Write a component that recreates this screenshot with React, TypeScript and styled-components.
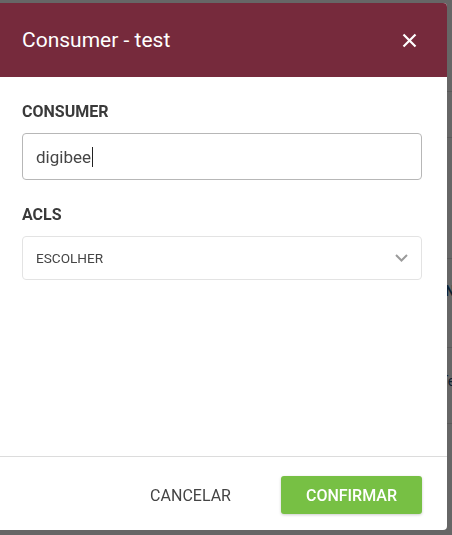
import React from "react";
import styled, { createGlobalStyle } from "styled-components";

const Global = createGlobalStyle`
  html, body { margin: 0; padding: 0; }
  body {
    font-family: Roboto, "Noto Sans", Arial, sans-serif;
    background: #ffffff;
    overflow: hidden;
  }
  * { box-sizing: border-box; }
`;

const Page = styled.div`
  width: 452px;
  height: 535px;
  background: #ffffff;
  display: flex;
  flex-direction: column;
`;

const Row = styled.div<{ $h: number; $indent?: number; $pt?: number; $bold?: boolean }>`
  height: ${(p) => p.$h}px;
  flex: none;
  border-bottom: 1px solid #dedede;
  display: flex;
  align-items: flex-start;
  padding-left: ${(p) => p.$indent ?? 0}px;
  padding-top: ${(p) => p.$pt ?? 0}px;
  font-size: 14px;
  line-height: 17px;
  font-weight: ${(p) => (p.$bold ? 700 : 400)};
  color: #1f4f7a;
  white-space: nowrap;
  overflow: hidden;
`;

const Backdrop = styled.div`
  position: fixed;
  inset: 0;
  background: rgba(0, 0, 0, 0.6);
`;

const Modal = styled.div`
  position: fixed;
  left: 0;
  top: 3px;
  width: 447px;
  height: 527px;
  background: #ffffff;
  border-radius: 0 4px 4px 0;
  overflow: hidden;
  display: flex;
  flex-direction: column;
`;

const Header = styled.div`
  height: 74px;
  flex: none;
  background: #762a3c;
  display: flex;
  align-items: center;
  justify-content: space-between;
  padding: 0 30px 0 22px;
`;

const Title = styled.h2`
  margin: 0;
  font-size: 21px;
  font-weight: 400;
  color: #ffffff;
  line-height: 25px;
`;

const CloseButton = styled.button`
  border: 0;
  padding: 0;
  background: none;
  width: 15px;
  height: 15px;
  display: flex;
  cursor: pointer;
`;

const Body = styled.div`
  flex: 1;
  padding: 25px 25px 0 22px;
  display: flex;
  flex-direction: column;
`;

const Label = styled.div<{ $top?: number }>`
  font-size: 16px;
  font-weight: 700;
  color: #3a3a3a;
  line-height: 19px;
  text-transform: uppercase;
  margin-top: ${(p) => p.$top ?? 0}px;
  margin-bottom: 12px;
`;

const TextField = styled.div`
  height: 47px;
  flex: none;
  border: 1px solid #b7b7b7;
  border-radius: 4px;
  padding: 0 13px;
  display: flex;
  align-items: center;
  font-size: 17px;
  color: #454545;
`;

const Caret = styled.span`
  display: inline-block;
  width: 1px;
  height: 20px;
  background: #222;
  margin-left: 1px;
`;

const SelectBox = styled.div`
  height: 44px;
  flex: none;
  border: 1px solid #e3e3e3;
  border-radius: 4px;
  padding: 0 13px;
  display: flex;
  align-items: center;
  justify-content: space-between;
  font-size: 13.6px;
  color: #454545;
`;

const Footer = styled.div`
  height: 74px;
  flex: none;
  border-top: 1px solid #dcdcdc;
  display: flex;
  justify-content: flex-end;
  align-items: flex-start;
  gap: 25px;
  padding: 19px 25px 0 0;
`;

const CancelButton = styled.button`
  height: 38px;
  border: 0;
  background: none;
  padding: 0 25px;
  font-family: inherit;
  font-size: 16px;
  color: #444;
  cursor: pointer;
`;

const ConfirmButton = styled.button`
  height: 38px;
  border: 0;
  border-radius: 3px;
  background: #77c044;
  padding: 0 25px;
  font-family: inherit;
  font-size: 16px;
  font-weight: 500;
  color: #ffffff;
  box-shadow: 0 1px 3px rgba(0, 0, 0, 0.2);
  cursor: pointer;
`;

export default function App() {
  return (
    <>
      <Global />
      <Page>
        <Row $h={92} />
        <Row $h={46} />
        <Row $h={121} />
        <Row $h={89} $indent={445} $pt={24} $bold>
          Nome
        </Row>
        <Row $h={76} $indent={440} $pt={25}>
          Teste
        </Row>
      </Page>
      <Backdrop />
      <Modal>
        <Header>
          <Title>Consumer - test</Title>
          <CloseButton aria-label="Fechar">
            <svg width="15" height="15" viewBox="0 0 15 15">
              <path d="M1.5 1.5 L13.5 13.5 M13.5 1.5 L1.5 13.5" stroke="#fff" strokeWidth="2.2" />
            </svg>
          </CloseButton>
        </Header>
        <Body>
          <Label>Consumer</Label>
          <TextField role="textbox">
            digibee
            <Caret />
          </TextField>
          <Label $top={25}>ACLS</Label>
          <SelectBox>
            <span>ESCOLHER</span>
            <svg width="13" height="8" viewBox="0 0 13 8">
              <path d="M1 1 L6.5 6.5 L12 1" fill="none" stroke="#9b9b9b" strokeWidth="2" />
            </svg>
          </SelectBox>
        </Body>
        <Footer>
          <CancelButton>CANCELAR</CancelButton>
          <ConfirmButton>CONFIRMAR</ConfirmButton>
        </Footer>
      </Modal>
    </>
  );
}
